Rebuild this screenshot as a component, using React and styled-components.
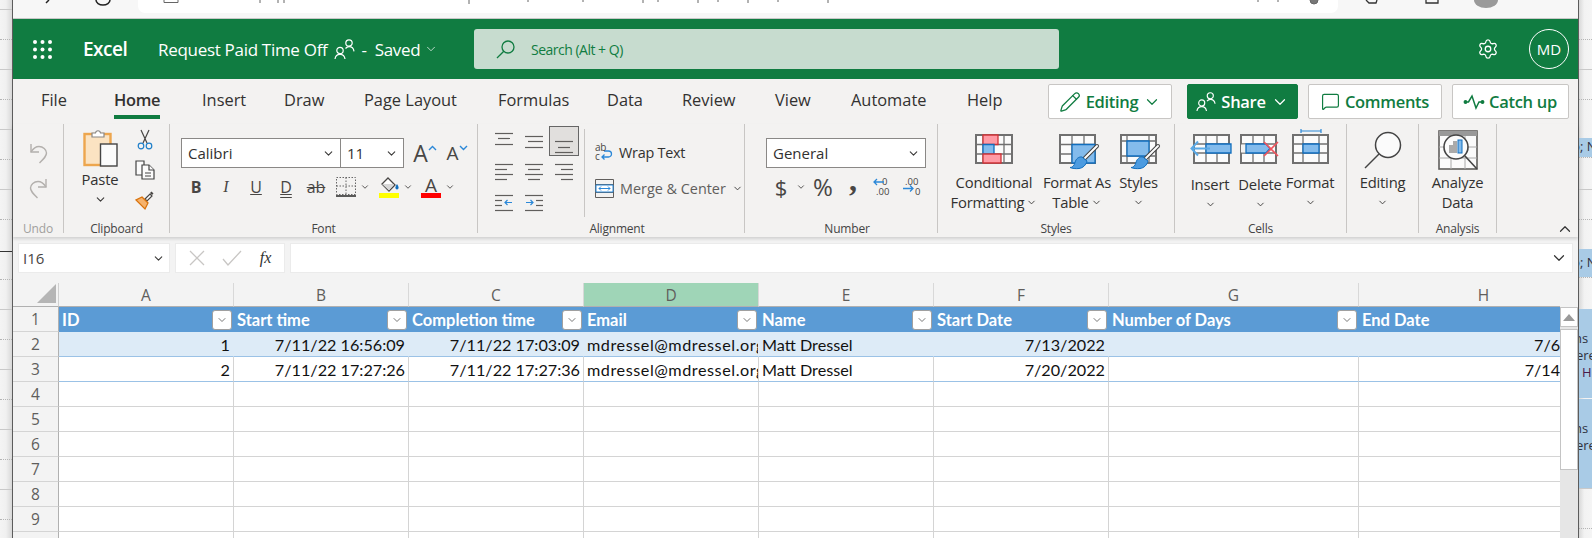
import React from "react";
import styled, { createGlobalStyle } from "styled-components";
import { ChevronDown, ChevronUp, Settings, Pencil, MessageSquare } from "lucide-react";

const UI = '"Open Sans", "Noto Sans", sans-serif';
const CELL = 'Lato, "Open Sans", sans-serif';
const GREEN = "#107c41";

const GlobalStyle = createGlobalStyle`
  html, body { margin: 0; padding: 0; background: #f3f2f1; }
  * { box-sizing: border-box; }
`;

const Page = styled.div`
  width: 1592px;
  height: 538px;
  display: flex;
  overflow: hidden;
  font-family: ${UI};
  color: #323130;
`;

/* bits of the page behind the window */
const Strip = styled.div`
  flex: none;
  width: ${(p) => p.$w}px;
  background: ${(p) => p.$bg};
  overflow: hidden;
`;

const Seg = styled.div`
  height: ${(p) => p.$h}px;
  border-top: ${(p) =>
    p.$kind === "solid" ? "1px solid #c9c9c9" :
    p.$kind === "dark" ? "1px solid #333" :
    p.$kind === "dots" ? "1px dotted #b5b5b5" : "none"};
`;

const Band = styled.div`
  height: ${(p) => p.$h}px;
  background: #a9cbe6;
  font-size: 13px;
  line-height: 17px;
  padding-top: ${(p) => p.$pt || 0}px;
  white-space: nowrap;
  color: #2f3140;
`;

const BandText = styled.div`
  margin-left: ${(p) => p.$ml || 0}px;
  padding-top: ${(p) => p.$pt || 0}px;
  color: ${(p) => p.$c || "inherit"};
`;

const Window = styled.div`
  flex: none;
  width: 1567px;
  display: flex;
  flex-direction: column;
  border-left: 1px solid #5c5c5c;
  border-right: 1px solid #5c5c5c;
  background: #f3f2f1;
`;

const BrowserBar = styled.div`
  height: 19px;
  display: flex;
  background: #f7f7f7;
  border-bottom: 1px solid #c8c8c8;
`;

const UrlBar = styled.div`
  width: 1200px;
  height: 13px;
  background: #fff;
  border-radius: 0 0 7px 7px;
  overflow: hidden;
`;

const AppBar = styled.div`
  height: 60px;
  display: flex;
  align-items: center;
  padding: 0 9px 0 20px;
  background: ${GREEN};
  color: #fff;
`;

const Brand = styled.div`
  width: 46px;
  margin: 0 29px 0 31px;
  font-size: 19px;
  font-weight: 600;
  letter-spacing: -0.5px;
`;

const DocTitle = styled.div`
  display: flex;
  align-items: center;
  width: 316px;
  font-size: 17px;
  white-space: nowrap;
  letter-spacing: -0.3px;
`;

const TitleGap = styled.span`
  width: ${(p) => p.$w}px;
`;

const SearchBox = styled.div`
  width: 585px;
  height: 40px;
  display: flex;
  align-items: center;
  gap: 16px;
  padding-left: 22px;
  border-radius: 3px;
  background: #c7dccf;
  color: ${GREEN};
  font-size: 14px;
  letter-spacing: -0.5px;
`;

const Spacer = styled.div`
  flex: 1;
`;

const Avatar = styled.div`
  width: 40px;
  height: 40px;
  margin-left: 30px;
  display: flex;
  align-items: center;
  justify-content: center;
  border: 1px solid #fff;
  border-radius: 50%;
  font-size: 15px;
`;

const TabRow = styled.div`
  height: 45px;
  display: flex;
  padding: 5px 9px 0 28px;
`;

const Tab = styled.div`
  width: ${(p) => p.$w}px;
  height: 35px;
  font-size: 16.4px;
  line-height: 32px;
  white-space: nowrap;
`;

const TabLabel = styled.span`
  display: inline-block;
  height: 35px;
  font-weight: ${(p) => (p.$active ? 600 : 400)};
  letter-spacing: ${(p) => (p.$active ? "-0.3px" : "0")};
  border-bottom: ${(p) => (p.$active ? `4px solid ${GREEN}` : "none")};
`;

const Actions = styled.div`
  margin-left: auto;
  display: flex;
  height: 35px;
`;

const ActionButton = styled.div`
  width: ${(p) => p.$w}px;
  margin-left: ${(p) => p.$ml}px;
  display: flex;
  align-items: center;
  justify-content: center;
  gap: 5px;
  border: 1px solid ${(p) => (p.$solid ? GREEN : "#c8c6c4")};
  border-radius: 2px;
  background: ${(p) => (p.$solid ? GREEN : "#fff")};
  color: ${(p) => (p.$solid ? "#fff" : GREEN)};
  font-size: 16.5px;
  font-weight: 600;
  letter-spacing: -0.3px;
  white-space: nowrap;
`;

const Ribbon = styled.div`
  height: 113px;
  display: flex;
  padding-bottom: 4px;
  box-shadow: 0 2px 3px rgba(0, 0, 0, 0.14);
  position: relative;
`;

const Group = styled.div`
  flex: none;
  width: ${(p) => p.$w}px;
  height: 109px;
  display: flex;
  flex-direction: column;
  border-right: 1px solid #c8c6c4;
`;

const GroupBody = styled.div`
  flex: 1;
  display: flex;
  flex-direction: ${(p) => p.$dir || "row"};
  align-items: ${(p) => p.$items || "flex-start"};
  padding: ${(p) => p.$pad || "0"};
  gap: ${(p) => p.$gap || 0}px;
`;

const GroupLabel = styled.div`
  height: 16px;
  margin-bottom: -4px;
  padding-left: ${(p) => p.$shift || 0}px;
  font-size: 12px;
  line-height: 16px;
  text-align: center;
  letter-spacing: -0.2px;
  color: ${(p) => (p.$muted ? "#a19f9d" : "#444")};
`;

const RibbonButton = styled.div`
  flex: none;
  width: ${(p) => p.$w}px;
  margin-right: ${(p) => p.$mr || 0}px;
  display: flex;
  flex-direction: column;
  align-items: center;
  padding-top: 5px;
  font-size: 14.8px;
  line-height: 20px;
  letter-spacing: -0.2px;
  white-space: nowrap;
`;

const Slot = styled.div`
  height: ${(p) => 43 + (p.$extra || 0)}px;
  padding-top: ${(p) => p.$pt || 0}px;
`;

const ButtonLine = styled.div`
  height: 20px;
  display: flex;
  align-items: center;
  gap: 2px;
`;

const SmallTools = styled.div`
  margin: 6px 0 0 7px;
  display: flex;
  flex-direction: column;
  gap: 10px;
`;

const Combo = styled.div`
  width: ${(p) => p.$w}px;
  height: 30px;
  flex: none;
  margin-left: ${(p) => p.$ml || 0}px;
  display: flex;
  align-items: center;
  justify-content: space-between;
  padding: 0 5px 0 6px;
  background: #fff;
  border: 1px solid #8a8886;
  font-size: 15px;
`;

const FontTop = styled.div`
  display: flex;
  align-items: center;
  height: 30px;
`;

const ToolRow = styled.div`
  display: flex;
  align-items: center;
  height: 30px;
  margin-top: 4px;
`;

const Tool = styled.div`
  flex: none;
  width: ${(p) => p.$w || 30}px;
  margin-left: ${(p) => p.$ml || 0}px;
  display: flex;
  flex-direction: column;
  align-items: center;
  justify-content: center;
  font-family: ${(p) => (p.$serif ? '"Liberation Serif", serif' : UI)};
  font-size: ${(p) => p.$size || 16}px;
  font-weight: ${(p) => (p.$bold ? 700 : 400)};
  font-style: ${(p) => (p.$italic ? "italic" : "normal")};
  text-decoration: ${(p) => p.$deco || "none"};
  color: ${(p) => p.$c || "#484644"};
  line-height: 20px;
`;

const RaisedMark = styled.span`
  height: 20px;
  margin-bottom: 14px;
`;

const LetterTop = styled.span`
  height: 16px;
  line-height: 16px;
`;

const ColorBar = styled.div`
  width: 20px;
  height: 5px;
  background: ${(p) => p.$c};
`;

const AlignGrid = styled.div`
  display: grid;
  grid-template-columns: repeat(3, 30px);
  grid-auto-rows: 30px;
  row-gap: 1px;
`;

const AlignCell = styled.div`
  border: 1px solid ${(p) => (p.$on ? "#666" : "transparent")};
  background: ${(p) => (p.$on ? "#e1dfdd" : "transparent")};
  svg { display: block; margin: -1px; }
`;

const InnerRule = styled.div`
  width: 1px;
  height: 88px;
  margin: 3px 10px 0 5px;
  background: #c8c6c4;
`;

const WrapCol = styled.div`
  display: flex;
  flex-direction: column;
  gap: 16px;
  padding-top: 16px;
`;

const WrapItem = styled.div`
  display: flex;
  align-items: center;
  gap: 6px;
  height: 20px;
  font-size: 14.4px;
  letter-spacing: ${(p) => p.$sp || "-0.25px"};
  white-space: nowrap;
  color: ${(p) => p.$c || "#323130"};
`;

const Collapse = styled.div`
  margin: 96px 0 0 auto;
  padding-right: 4px;
`;

const FormulaBar = styled.div`
  height: 46px;
  display: flex;
  gap: 5px;
  padding: 6px 5px 0 5px;
  background: #f3f3f3;
`;

const FormulaBox = styled.div`
  flex: ${(p) => (p.$w ? "none" : 1)};
  width: ${(p) => (p.$w ? `${p.$w}px` : "auto")};
  height: 30px;
  display: flex;
  align-items: center;
  justify-content: ${(p) => p.$justify || "space-between"};
  padding: 0 4px;
  background: #fff;
  border: 1px solid #ebebeb;
  font-size: 15px;
  color: #484644;
`;

const FxText = styled.span`
  font-family: "Liberation Serif", serif;
  font-style: italic;
  font-size: 16px;
  color: #323130;
`;

const SheetArea = styled.div`
  flex: 1;
  display: flex;
  min-height: 0;
`;

const Sheet = styled.div`
  width: 1547px;
  overflow: hidden;
  background: #fff;
`;

const SheetRow = styled.div`
  display: grid;
  grid-template-columns: 46px repeat(6, 175px) 250px 250px;
  height: ${(p) => p.$h || 25}px;
  width: 1596px;
  background: ${(p) => p.$bg || "#fff"};
`;

const Corner = styled.div`
  background: #f3f3f3;
  border-right: 1px solid #d0d0d0;
  border-bottom: 1px solid #b0b0b0;
  padding: 1px 0 0 24px;
`;

const ColHead = styled.div`
  display: flex;
  align-items: center;
  justify-content: center;
  background: ${(p) => (p.$on ? "#9fd5b7" : "#f3f3f3")};
  border-right: 1px solid #d8d8d8;
  border-bottom: 1px solid #b0b0b0;
  font-size: 15.5px;
  color: #605e5c;
`;

const RowHead = styled.div`
  display: flex;
  align-items: center;
  justify-content: center;
  background: #f3f3f3;
  border-right: 1px solid #b0b0b0;
  border-bottom: 1px solid #d4d4d4;
  font-size: 15.5px;
  color: #605e5c;
`;

const HeadCell = styled.div`
  display: flex;
  align-items: center;
  justify-content: space-between;
  padding: 0 2px 0 3px;
  background: #5b9bd5;
  color: #fff;
  font-family: ${CELL};
  font-size: 16.5px;
  font-weight: 700;
  overflow: hidden;
  white-space: nowrap;
`;

const FilterButton = styled.div`
  flex: none;
  width: 20px;
  height: 20px;
  display: flex;
  align-items: center;
  justify-content: center;
  background: #fff;
  border: 1px solid #a0a0a0;
  border-radius: 3px;
  color: #555;
`;

const Cell = styled.div`
  display: flex;
  align-items: flex-end;
  justify-content: ${(p) => (p.$right ? "flex-end" : "flex-start")};
  padding: 0 3px 1px 3px;
  border-right: 1px solid ${(p) => p.$line || "#d4d4d4"};
  border-bottom: 1px solid ${(p) => p.$under || "#d4d4d4"};
  font-family: ${CELL};
  font-size: 16.2px;
  line-height: 20px;
  letter-spacing: ${(p) => p.$sp || "0"};
  color: #111;
  overflow: hidden;
  white-space: nowrap;
`;

const Scrollbar = styled.div`
  flex: 1;
  display: flex;
  flex-direction: column;
  background: #e6e6e6;
`;

const ScrollTop = styled.div`
  height: 24px;
  background: #f3f3f3;
`;

const ScrollArrow = styled.div`
  height: 20px;
  display: flex;
  align-items: center;
  justify-content: center;
  background: #fff;
  border: 1px solid #c4c4c4;
`;

const ScrollThumb = styled.div`
  height: 141px;
  margin-top: 2px;
  background: #fff;
  border: 1px solid #c4c4c4;
`;

/* icons */
const Ico = styled.svg`
  display: block;
  flex: none;
  overflow: visible;
`;

const Chev = ({ size = 13, w = 2, c = "#3b3a39" }) => (
  <ChevronDown size={size} strokeWidth={w} color={c} />
);

const Waffle = () => (
  <Ico width="19" height="19" viewBox="0 0 19 19" fill="#fff">
    {[2, 9.5, 17].map((y) => [2, 9.5, 17].map((x) => <circle key={`${x}${y}`} cx={x} cy={y} r="2" />))}
  </Ico>
);

const People = ({ c = "#fff", size = 21 }) => (
  <Ico width={size} height={size} viewBox="0 0 21 21" fill="none" stroke={c} strokeWidth="1.2">
    <circle cx="6" cy="11.5" r="3.2" />
    <path d="M1 20c.4-3 2.4-4.6 5-4.6s4.6 1.6 5 4.6" />
    <circle cx="15" cy="4" r="3.2" />
    <path d="M11.5 9.5c1-1.2 2.2-1.8 3.5-1.8 2.6 0 4.6 1.6 5 4.6" />
  </Ico>
);

const SearchIcon = () => (
  <Ico width="19" height="19" viewBox="0 0 19 19" fill="none" stroke={GREEN} strokeWidth="1.3">
    <circle cx="12" cy="7" r="6" />
    <path d="M7.8 11.2 1 18" />
  </Ico>
);

const PulseIcon = () => (
  <Ico width="20" height="16" viewBox="0 0 20 16" fill="none" stroke={GREEN} strokeWidth="1.5">
    <path d="M2 8h2.5L8 2l4 12 3-6h3" />
    <circle cx="1.5" cy="8" r="1.2" fill={GREEN} />
    <circle cx="18.5" cy="8" r="1.2" fill={GREEN} />
  </Ico>
);

const UndoIcon = ({ flip }) => (
  <Ico width="19" height="21" viewBox="0 0 19 21" fill="none" stroke="#b3b0ad" strokeWidth="1.4"
    style={flip ? { transform: "scaleX(-1)" } : undefined}>
    <path d="M2 1v8h8" />
    <path d="M2 9c2.5-4 5-5.500 8-5.500 4 0 7.500 3 7.500 6.500 0 3-2 5-7 10" />
  </Ico>
);

const PasteIcon = () => (
  <Ico width="35" height="39" viewBox="0 0 35 39">
    <rect x="1.5" y="5" width="26" height="31" fill="#fbe3c2" stroke="#eda64e" strokeWidth="2.4" />
    <path d="M9 8V4h3.500c.5-3 4.500-3 5 0H21v4z" fill="#fff" stroke="#8a8886" strokeWidth="1.2" />
    <rect x="17.5" y="15" width="16.500" height="22" fill="#fbfbfb" stroke="#444" strokeWidth="1.4" />
  </Ico>
);

const CutIcon = () => (
  <Ico width="20" height="20" viewBox="0 0 20 20" fill="none" strokeWidth="1.2">
    <path d="M6 0l6 13M14 0L8 13" stroke="#484644" />
    <circle cx="6" cy="16" r="2.800" stroke="#1f7fc9" />
    <circle cx="14" cy="16" r="2.800" stroke="#1f7fc9" />
  </Ico>
);

const CopyIcon = () => (
  <Ico width="20" height="20" viewBox="0 0 20 20" fill="#fbfbfb" stroke="#444" strokeWidth="1.2">
    <path d="M1 1h8v14H1z" />
    <path d="M7 5h7l5 5v9H7z" />
    <path d="M14 5v5h5M10 13h6M10 16h6" />
  </Ico>
);

const PainterIcon = () => (
  <Ico width="20" height="20" viewBox="0 0 20 20">
    <path d="M10 9l5-5 2 2-5 5z" fill="#fff" stroke="#484644" strokeWidth="1.2" />
    <path d="M15 3l1.500-1.500 2 2L17 5z" fill="#484644" />
    <path d="M7 7l6 6-3 6-9-9z" fill="#f6b26b" stroke="#d9730d" strokeWidth="1.3" />
  </Ico>
);

const SmallCaret = ({ up }) => (
  <Ico width="9" height="6" viewBox="0 0 9 6" fill="none" stroke="#2b88d8" strokeWidth="1.4"
    style={{ marginBottom: 10 }}>
    <path d={up ? "M1 5l3.500-3.500L8 5" : "M1 1l3.500 3.500L8 1"} />
  </Ico>
);

const BordersIcon = () => (
  <Ico width="20" height="20" viewBox="0 0 20 20" fill="none" stroke="#666" strokeWidth="1" strokeDasharray="1.500 1.500">
    <path d="M.5.5h19v17H.5zM10 .5v17M.5 9h19" />
    <path d="M0 19h20" stroke="#333" strokeWidth="1.6" strokeDasharray="none" />
  </Ico>
);

const FillIcon = () => (
  <Ico width="20" height="16" viewBox="0 0 20 16" fill="none">
    <path d="M9 1l7 7-6 6-7-7z" stroke="#484644" strokeWidth="1.3" fill="#fff" />
    <path d="M3 7h12l-5 6.500z" fill="#d8d8d8" />
    <path d="M18 7c1.200 2 1.600 3 1.600 3.800a1.600 1.600 0 0 1-3.200 0c0-.8.400-1.800 1.600-3.800z" fill="#106ebe" />
  </Ico>
);

const ALIGN = {
  top: [[6, 24, 7], [9, 21, 12], [6, 24, 18]],
  middle: [[6, 24, 10], [9, 24, 15], [6, 24, 21]],
  bottom: [[6, 24, 15], [9, 21, 21], [6, 24, 26]],
  left: [[6, 24, 7], [6, 18, 12], [6, 24, 17], [6, 18, 22]],
  center: [[6, 24, 7], [9, 21, 12], [6, 24, 17], [9, 21, 22]],
  right: [[6, 24, 7], [12, 24, 12], [6, 24, 17], [12, 24, 22]],
  outdent: [[6, 24, 7], [6, 13, 12], [6, 13, 17], [6, 24, 22]],
  indent: [[6, 24, 7], [17, 24, 12], [17, 24, 17], [6, 24, 22]],
};

const AlignIcon = ({ kind }) => (
  <Ico width="30" height="30" viewBox="0 0 30 30" fill="none" stroke="#605e5c" strokeWidth="1.2">
    {ALIGN[kind].map(([a, b, y]) => <path key={y} d={`M${a} ${y + 0.5}H${b}`} />)}
    {kind === "outdent" && <path d="M23 14.500h-7m2.500-2.500-2.500 2.500 2.500 2.500" stroke="#2b88d8" />}
    {kind === "indent" && <path d="M7 14.500h7m-2.500-2.500 2.500 2.500-2.500 2.500" stroke="#2b88d8" />}
  </Ico>
);

const WrapIcon = () => (
  <Ico width="18" height="18" viewBox="0 0 18 18" fill="none">
    <path d="M9 8h4.500a2.500 2.500 0 0 1 0 6H7m2.500-2.500L7 14l2.500 2.500" stroke="#2b88d8" strokeWidth="1.3" />
    <text x="0" y="7.5" fontFamily={UI} fontSize="10" fill="#484644">ab</text>
    <text x="0" y="17" fontFamily={UI} fontSize="10" fill="#484644">c</text>
  </Ico>
);

const MergeIcon = () => (
  <Ico width="19" height="19" viewBox="0 0 19 19" fill="none">
    <path d="M.5.500h18v18H.5z" stroke="#605e5c" />
    <path d="M.5 5.500h18M.5 13.500h18" stroke="#605e5c" />
    <path d="M1 6h17v7H1z" fill="#fff" stroke="#2b88d8" />
    <path d="M4 9.500h11M6 7.500l-2 2 2 2M13 7.500l2 2-2 2" stroke="#2b88d8" />
  </Ico>
);

const DecimalIcon = ({ more }) => (
  <Ico width="20" height="20" viewBox="0 0 20 20">
    <text x={more ? 2 : 9} y="7.5" fontFamily={UI} fontSize="9.5" fill="#484644">{more ? ".00" : "0"}</text>
    <text x={more ? 12 : 3} y="18" fontFamily={UI} fontSize="9.5" fill="#484644">{more ? "0" : ".00"}</text>
    <path d={more ? "M0 11.500h10m-3-3 3 3-3 3" : "M11 5h-10m3-3-3 3 3 3"} fill="none" stroke="#2b88d8" strokeWidth="1.3" />
  </Ico>
);

const Brush = () => (
  <g>
    <path d="M37 11 25 23" stroke="#444" strokeWidth="4" strokeLinecap="round" fill="none" />
    <path d="M37 11 25 23" stroke="#fff" strokeWidth="2" strokeLinecap="round" fill="none" />
    <path d="M22 22l5 4c-1 4-4 7-8 7.500-3 .4-7 0-9-1 3 0 4-2 5-5 1-4 4-6 7-5.500z" fill="#4c9be0" stroke="#106ebe" strokeWidth="1" />
  </g>
);

const SheetLines = ({ w = 35, h = 28, cols, rows }) => (
  <g fill="none" stroke="#707070">
    {cols.map((x) => <path key={`c${x}`} d={`M${x} 0V${h}`} strokeWidth="1.3" />)}
    {rows.map((y) => <path key={`r${y}`} d={`M0 ${y}H${w}`} strokeWidth="1.3" />)}
    <rect x="0" y="0" width={w} height={h} strokeWidth="2" />
  </g>
);

const BLUE = { fill: "#83bbec", stroke: "#106ebe", strokeWidth: 1.3 };
const RED = { fill: "#ff9aa5", stroke: "#d13438", strokeWidth: 1.3 };

const CondIcon = () => (
  <Ico width="36" height="28" viewBox="0 0 36 28">
    <rect width="36" height="28" fill="#fbfbfb" />
    <SheetLines w={36} cols={[7, 28]} rows={[9.5, 19]} />
    <path d="M22 0v9.500H7V0z" {...RED} />
    <path d="M7 9.500h11V19H7z" {...BLUE} />
    <path d="M7 19h18v9H7z" {...RED} />
  </Ico>
);

const TableStyleIcon = () => (
  <Ico width="35" height="28" viewBox="0 0 35 28">
    <rect width="35" height="28" fill="#fbfbfb" />
    <SheetLines cols={[12, 24]} rows={[9.5, 19]} />
    <path d="M12 9.500h23V28H12z" {...BLUE} />
    <Brush />
  </Ico>
);

const StylesIcon = () => (
  <Ico width="35" height="28" viewBox="0 0 35 28">
    <rect width="35" height="28" fill="#fbfbfb" />
    <SheetLines cols={[6, 28]} rows={[6, 21]} />
    <path d="M6 6h22v15H6z" {...BLUE} />
    <Brush />
  </Ico>
);

const InsertIcon = () => (
  <Ico width="38" height="34" viewBox="-3 -6 38 34">
    <rect width="35" height="28" fill="#fbfbfb" />
    <SheetLines cols={[12, 23]} rows={[9, 18]} />
    <path d="M12 9h25v9H12z" {...BLUE} />
    <path d="M16 13.500H-2m6-7-6.500 7 6.500 7" fill="none" stroke="#5aa9e6" strokeWidth="2" />
  </Ico>
);

const DeleteIcon = () => (
  <Ico width="38" height="34" viewBox="0 -6 38 34">
    <rect width="35" height="28" fill="#fbfbfb" />
    <SheetLines cols={[12, 23]} rows={[9, 18]} />
    <path d="M0 9.500h5v8H0z" fill="#f3f2f1" />
    <path d="M5 9h20l4 4.500-4 4.500H5z" {...BLUE} />
    <path d="M23 7l14 14M37 7 23 21" stroke="#f1545d" strokeWidth="1.6" fill="none" />
  </Ico>
);

const FormatIcon = () => (
  <Ico width="35" height="34" viewBox="0 -6 35 34">
    <rect width="35" height="28" fill="#fbfbfb" />
    <SheetLines cols={[10, 26]} rows={[9, 18]} />
    <path d="M10 9h16v9H10z" {...BLUE} />
    <path d="M8-4h20M8-6v4M28-6v4" stroke="#2b88d8" strokeWidth="1.2" fill="none" />
  </Ico>
);

const LensIcon = () => (
  <Ico width="38" height="38" viewBox="0 0 38 38" fill="#fbfbfb" stroke="#444" strokeWidth="1.5">
    <circle cx="24" cy="13" r="12.500" />
    <path d="M15 22 1 36" />
  </Ico>
);

const AnalyzeIcon = () => (
  <Ico width="40" height="40" viewBox="0 0 40 40">
    <rect x="1" y="1" width="38" height="38" fill="#fbfbfb" stroke="#605e5c" strokeWidth="1.6" />
    <rect x="1" y="1" width="38" height="5" fill="#999" />
    <path d="M1 28h38M1 17h38M13 6v33M27 6v33" stroke="#aaa" fill="none" />
    <circle cx="18" cy="17" r="12" fill="#fbfbfb" stroke="#444" strokeWidth="1.6" />
    <path d="M27 26l12 13" stroke="#444" strokeWidth="1.6" />
    <rect x="11" y="15" width="6" height="8" fill="#aaa" />
    <rect x="15" y="11" width="4" height="12" fill="#aaa" />
    <rect x="20" y="10" width="4" height="13" fill="#83bbec" stroke="#106ebe" />
  </Ico>
);

const TAB_WIDTHS = [
  ["File", 73], ["Home", 88], ["Insert", 82], ["Draw", 80], ["Page Layout", 134], ["Formulas", 109],
  ["Data", 75], ["Review", 93], ["View", 76], ["Automate", 116], ["Help", 60],
];

const LEFT_SEGS = [9, 30, 30, 30, 30, 30, 30, 30, 32, 28, 30, 30, 30, 30, 30, 30, 30, 30, 30];
const LEFT_KINDS = ["none", "solid", "dots", "solid", "dots", "solid", "dots", "solid", "dots", "dark", "dots", "solid", "dots", "solid", "dots", "solid", "dots", "solid", "dots"];

const COLUMNS = ["A", "B", "C", "D", "E", "F", "G", "H"];
const HEADERS = ["ID", "Start time", "Completion time", "Email", "Name", "Start Date", "Number of Days", "End Date"];
const RECORDS = [
  ["1", "7/11/22 16:56:09", "7/11/22 17:03:09", "mdressel@mdressel.org", "Matt Dressel", "7/13/2022", "", "7/6/2022"],
  ["2", "7/11/22 17:27:26", "7/11/22 17:27:36", "mdressel@mdressel.org", "Matt Dressel", "7/20/2022", "", "7/14/2022"],
];
const LEFT_ALIGNED = [3, 4];
const EMAIL_COL = 3;

const ALIGN_KINDS = ["top", "middle", "bottom", "left", "center", "right", "outdent", "indent"];

export default function App() {
  return (
    <Page>
      <GlobalStyle />
      <Strip $w={12} $bg="linear-gradient(90deg, #f4f4f4 0%, #f0f0f0 50%, #d8d8d8 100%)">
        {LEFT_SEGS.map((h, i) => <Seg key={i} $h={h} $kind={LEFT_KINDS[i]} />)}
      </Strip>

      <Window>
        <BrowserBar>
          <Ico width="125" height="18" viewBox="0 0 125 18" fill="none" stroke="#222" strokeWidth="1.5">
            <path d="M36 0l-3 3" />
            <path d="M83 0a7 5 0 0 0 14 0" />
          </Ico>
          <UrlBar>
            <Ico width="1200" height="4" viewBox="0 0 1200 4" fill="none" stroke="#666">
              <path d="M26 0v2.500h14V0" />
              <path d="M122 0v3M140 0v3M146 0v3M331 0v4M390 0v2M445 0v2M505 0v3M520 0v2M560 0v3M580 0v2M610 0v3M640 0v2M690 0v3M1120 0v2M1140 0v2" />
              <path d="M1172 0a4 4 0 0 0 8 0" fill="#777" />
            </Ico>
          </UrlBar>
          <Ico width="240" height="18" viewBox="0 0 240 18" fill="none" stroke="#333" strokeWidth="1.3">
            <path d="M28 0l3 3h7l1-3" />
            <path d="M88 0v3h12V0" />
            <path d="M136 0a12 8 0 0 0 24 0z" fill="#9a9a9a" stroke="none" />
          </Ico>
        </BrowserBar>

        <AppBar>
          <Waffle />
          <Brand>Excel</Brand>
          <DocTitle>
            Request Paid Time Off
            <TitleGap $w={6} />
            <People />
            <TitleGap $w={7} />-<TitleGap $w={8} />
            Saved
            <TitleGap $w={4} />
            <Chev size={14} c="#fff" w={1.2} />
          </DocTitle>
          <SearchBox>
            <SearchIcon />
            Search (Alt + Q)
          </SearchBox>
          <Spacer />
          <Settings size={22} strokeWidth={1.4} color="#fff" />
          <Avatar>MD</Avatar>
        </AppBar>

        <TabRow>
          {TAB_WIDTHS.map(([name, w]) => (
            <Tab key={name} $w={w}>
              <TabLabel $active={name === "Home"}>{name}</TabLabel>
            </Tab>
          ))}
          <Actions>
            <ActionButton $w={124} $ml={0}>
              <Pencil size={22} strokeWidth={1.4} />
              Editing
              <Chev size={18} c={GREEN} w={1.6} />
            </ActionButton>
            <ActionButton $w={111} $ml={15} $solid>
              <People size={20} />
              Share
              <Chev size={18} c="#fff" w={1.6} />
            </ActionButton>
            <ActionButton $w={134} $ml={10}>
              <MessageSquare size={19} strokeWidth={1.5} />
              Comments
            </ActionButton>
            <ActionButton $w={117} $ml={10}>
              <PulseIcon />
              Catch up
            </ActionButton>
          </Actions>
        </TabRow>

        <Ribbon>
          <Group $w={51}>
            <GroupBody $dir="column" $items="center" $pad="19px 0 0" $gap={14}>
              <UndoIcon />
              <UndoIcon flip />
            </GroupBody>
            <GroupLabel $muted>Undo</GroupLabel>
          </Group>

          <Group $w={106}>
            <GroupBody $pad="0 0 0 8px">
              <RibbonButton $w={56}>
                <Slot $extra={-3}><PasteIcon /></Slot>
                <ButtonLine>Paste</ButtonLine>
                <ButtonLine><Chev /></ButtonLine>
              </RibbonButton>
              <SmallTools>
                <CutIcon />
                <CopyIcon />
                <PainterIcon />
              </SmallTools>
            </GroupBody>
            <GroupLabel>Clipboard</GroupLabel>
          </Group>

          <Group $w={308}>
            <GroupBody $dir="column" $pad="14px 0 0 11px">
              <FontTop>
                <Combo $w={160}>Calibri<Chev /></Combo>
                <Combo $w={64} $ml={-1}>11<Chev /></Combo>
                <Tool $w={34} $ml={4} $size={23}><FontTop><span>A</span><SmallCaret up /></FontTop></Tool>
                <Tool $w={30} $size={19}><FontTop><span>A</span><SmallCaret /></FontTop></Tool>
              </FontTop>
              <ToolRow>
                <Tool $bold>B</Tool>
                <Tool $italic $serif>I</Tool>
                <Tool $deco="underline">U</Tool>
                <Tool $deco="underline double">D</Tool>
                <Tool $deco="line-through">ab</Tool>
                <Tool><BordersIcon /></Tool>
                <Tool $w={8}><Chev size={10} /></Tool>
                <Tool $ml={5}><FillIcon /><ColorBar $c="#ffff00" /></Tool>
                <Tool $w={8}><Chev size={10} /></Tool>
                <Tool $ml={4} $size={19}><LetterTop>A</LetterTop><ColorBar $c="#ff0000" /></Tool>
                <Tool $w={8}><Chev size={10} /></Tool>
              </ToolRow>
            </GroupBody>
            <GroupLabel>Font</GroupLabel>
          </Group>

          <Group $w={267}>
            <GroupBody $pad="2px 0 0 11px">
              <AlignGrid>
                {ALIGN_KINDS.map((k) => (
                  <AlignCell key={k} $on={k === "bottom"}><AlignIcon kind={k} /></AlignCell>
                ))}
              </AlignGrid>
              <InnerRule />
              <WrapCol>
                <WrapItem><WrapIcon />Wrap Text</WrapItem>
                <WrapItem $c="#605e5c" $sp="0"><MergeIcon />Merge &amp; Center<Chev size={11} /></WrapItem>
              </WrapCol>
            </GroupBody>
            <GroupLabel $shift={12}>Alignment</GroupLabel>
          </Group>

          <Group $w={193}>
            <GroupBody $dir="column" $pad="14px 0 0 21px">
              <FontTop>
                <Combo $w={160}>General<Chev /></Combo>
              </FontTop>
              <ToolRow>
                <Tool $size={22}>$</Tool>
                <Tool $w={10}><Chev size={10} /></Tool>
                <Tool $ml={2} $size={24}>%</Tool>
                <Tool $size={32} $bold $serif><RaisedMark>,</RaisedMark></Tool>
                <Tool><DecimalIcon /></Tool>
                <Tool><DecimalIcon more /></Tool>
              </ToolRow>
            </GroupBody>
            <GroupLabel $shift={12}>Number</GroupLabel>
          </Group>

          <Group $w={237}>
            <GroupBody $pad="0 0 0 14px">
              <RibbonButton $w={84} $mr={8}>
                <Slot $pt={6}><CondIcon /></Slot>
                <ButtonLine>Conditional</ButtonLine>
                <ButtonLine>Formatting<Chev size={11} /></ButtonLine>
              </RibbonButton>
              <RibbonButton $w={66} $mr={10}>
                <Slot $pt={6}><TableStyleIcon /></Slot>
                <ButtonLine>Format As</ButtonLine>
                <ButtonLine>Table<Chev size={11} /></ButtonLine>
              </RibbonButton>
              <RibbonButton $w={37}>
                <Slot $pt={6}><StylesIcon /></Slot>
                <ButtonLine>Styles</ButtonLine>
                <ButtonLine><Chev size={11} /></ButtonLine>
              </RibbonButton>
            </GroupBody>
            <GroupLabel>Styles</GroupLabel>
          </Group>

          <Group $w={172}>
            <GroupBody $pad="0 0 0 10px">
              <RibbonButton $w={50}>
                <Slot $extra={2}><InsertIcon /></Slot>
                <ButtonLine>Insert</ButtonLine>
                <ButtonLine><Chev size={11} /></ButtonLine>
              </RibbonButton>
              <RibbonButton $w={50}>
                <Slot $extra={2}><DeleteIcon /></Slot>
                <ButtonLine>Delete</ButtonLine>
                <ButtonLine><Chev size={11} /></ButtonLine>
              </RibbonButton>
              <RibbonButton $w={50}>
                <Slot><FormatIcon /></Slot>
                <ButtonLine>Format</ButtonLine>
                <ButtonLine><Chev size={11} /></ButtonLine>
              </RibbonButton>
            </GroupBody>
            <GroupLabel>Cells</GroupLabel>
          </Group>

          <Group $w={72}>
            <GroupBody $items="center" $dir="column">
              <RibbonButton $w={70}>
                <Slot $pt={3}><LensIcon /></Slot>
                <ButtonLine>Editing</ButtonLine>
                <ButtonLine><Chev size={11} /></ButtonLine>
              </RibbonButton>
            </GroupBody>
          </Group>

          <Group $w={78}>
            <GroupBody $items="center" $dir="column">
              <RibbonButton $w={70}>
                <Slot $pt={1}><AnalyzeIcon /></Slot>
                <ButtonLine>Analyze</ButtonLine>
                <ButtonLine>Data</ButtonLine>
              </RibbonButton>
            </GroupBody>
            <GroupLabel>Analysis</GroupLabel>
          </Group>

          <Collapse><ChevronUp size={18} strokeWidth={1.6} color="#333" /></Collapse>
        </Ribbon>

        <FormulaBar>
          <FormulaBox $w={152}>I16<Chev /></FormulaBox>
          <FormulaBox $w={110} $justify="space-around">
            <Ico width="16" height="16" viewBox="0 0 16 16" fill="none" stroke="#c8c6c4" strokeWidth="1.3">
              <path d="M1 1l14 14M15 1 1 15" />
            </Ico>
            <Ico width="20" height="16" viewBox="0 0 20 16" fill="none" stroke="#c8c6c4" strokeWidth="1.3">
              <path d="M1 9l5 6L19 1" />
            </Ico>
            <FxText>fx</FxText>
          </FormulaBox>
          <FormulaBox>
            <span />
            <Chev size={18} c="#333" w={1.6} />
          </FormulaBox>
        </FormulaBar>

        <SheetArea>
          <Sheet>
            <SheetRow $h={24}>
              <Corner>
                <Ico width="19" height="19" viewBox="0 0 19 19"><path d="M19 0v19H0z" fill="#b5b5b5" /></Ico>
              </Corner>
              {COLUMNS.map((c) => <ColHead key={c} $on={c === "D"}>{c}</ColHead>)}
            </SheetRow>
            <SheetRow>
              <RowHead>1</RowHead>
              {HEADERS.map((h) => (
                <HeadCell key={h}>
                  {h}
                  <FilterButton><Chev size={12} c="#555" w={1.6} /></FilterButton>
                </HeadCell>
              ))}
            </SheetRow>
            {RECORDS.map((rec, i) => (
              <SheetRow key={rec[0]} $bg={i === 0 ? "#ddebf7" : "#fff"}>
                <RowHead>{i + 2}</RowHead>
                {rec.map((val, j) => (
                  <Cell
                    key={j}
                    $right={!LEFT_ALIGNED.includes(j)}
                    $sp={j === EMAIL_COL ? "0.55px" : undefined}
                    $line={i === 0 ? "transparent" : "#d4d4d4"}
                    $under="#9bc2e6"
                  >
                    {val}
                  </Cell>
                ))}
              </SheetRow>
            ))}
            {[4, 5, 6, 7, 8, 9, 10].map((n) => (
              <SheetRow key={n}>
                <RowHead>{n === 10 ? "" : n}</RowHead>
                {COLUMNS.map((c) => <Cell key={c} />)}
              </SheetRow>
            ))}
          </Sheet>
          <Scrollbar>
            <ScrollTop />
            <ScrollArrow>
              <Ico width="12" height="7" viewBox="0 0 12 7"><path d="M6 0l6 7H0z" fill="#9a9a9a" /></Ico>
            </ScrollArrow>
            <ScrollThumb />
          </Scrollbar>
        </SheetArea>
      </Window>

      <Strip $w={13} $bg="linear-gradient(90deg, #d8d8d8 0%, #f2f2f2 40%, #f5f5f5 100%)">
        <Seg $h={39} />
        <Seg $h={30} $kind="dots" />
        <Seg $h={30} $kind="solid" />
        <Seg $h={39} $kind="dots" />
        <Band $h={19}><BandText $ml={-7}>p; N</BandText></Band>
        <Seg $h={32} $kind="dots" />
        <Seg $h={30} $kind="solid" />
        <Seg $h={30} $kind="dots" />
        <Band $h={28}><BandText $ml={-7} $pt={5}>p; N</BandText></Band>
        <Seg $h={32} $kind="dots" />
        <Band $h={89} $pt={21}>
          <BandText $ml={-5}>ns</BandText>
          <BandText $ml={-3}>ere</BandText>
          <BandText $ml={3} $c="#4a1a4a">Hu</BandText>
        </Band>
        <Seg $h={1} />
        <Band $h={89} $pt={21}>
          <BandText $ml={-5}>ns</BandText>
          <BandText $ml={-3}>ere</BandText>
        </Band>
        <Seg $h={40} $kind="solid" />
        <Seg $h={10} $kind="dots" />
      </Strip>
    </Page>
  );
}
